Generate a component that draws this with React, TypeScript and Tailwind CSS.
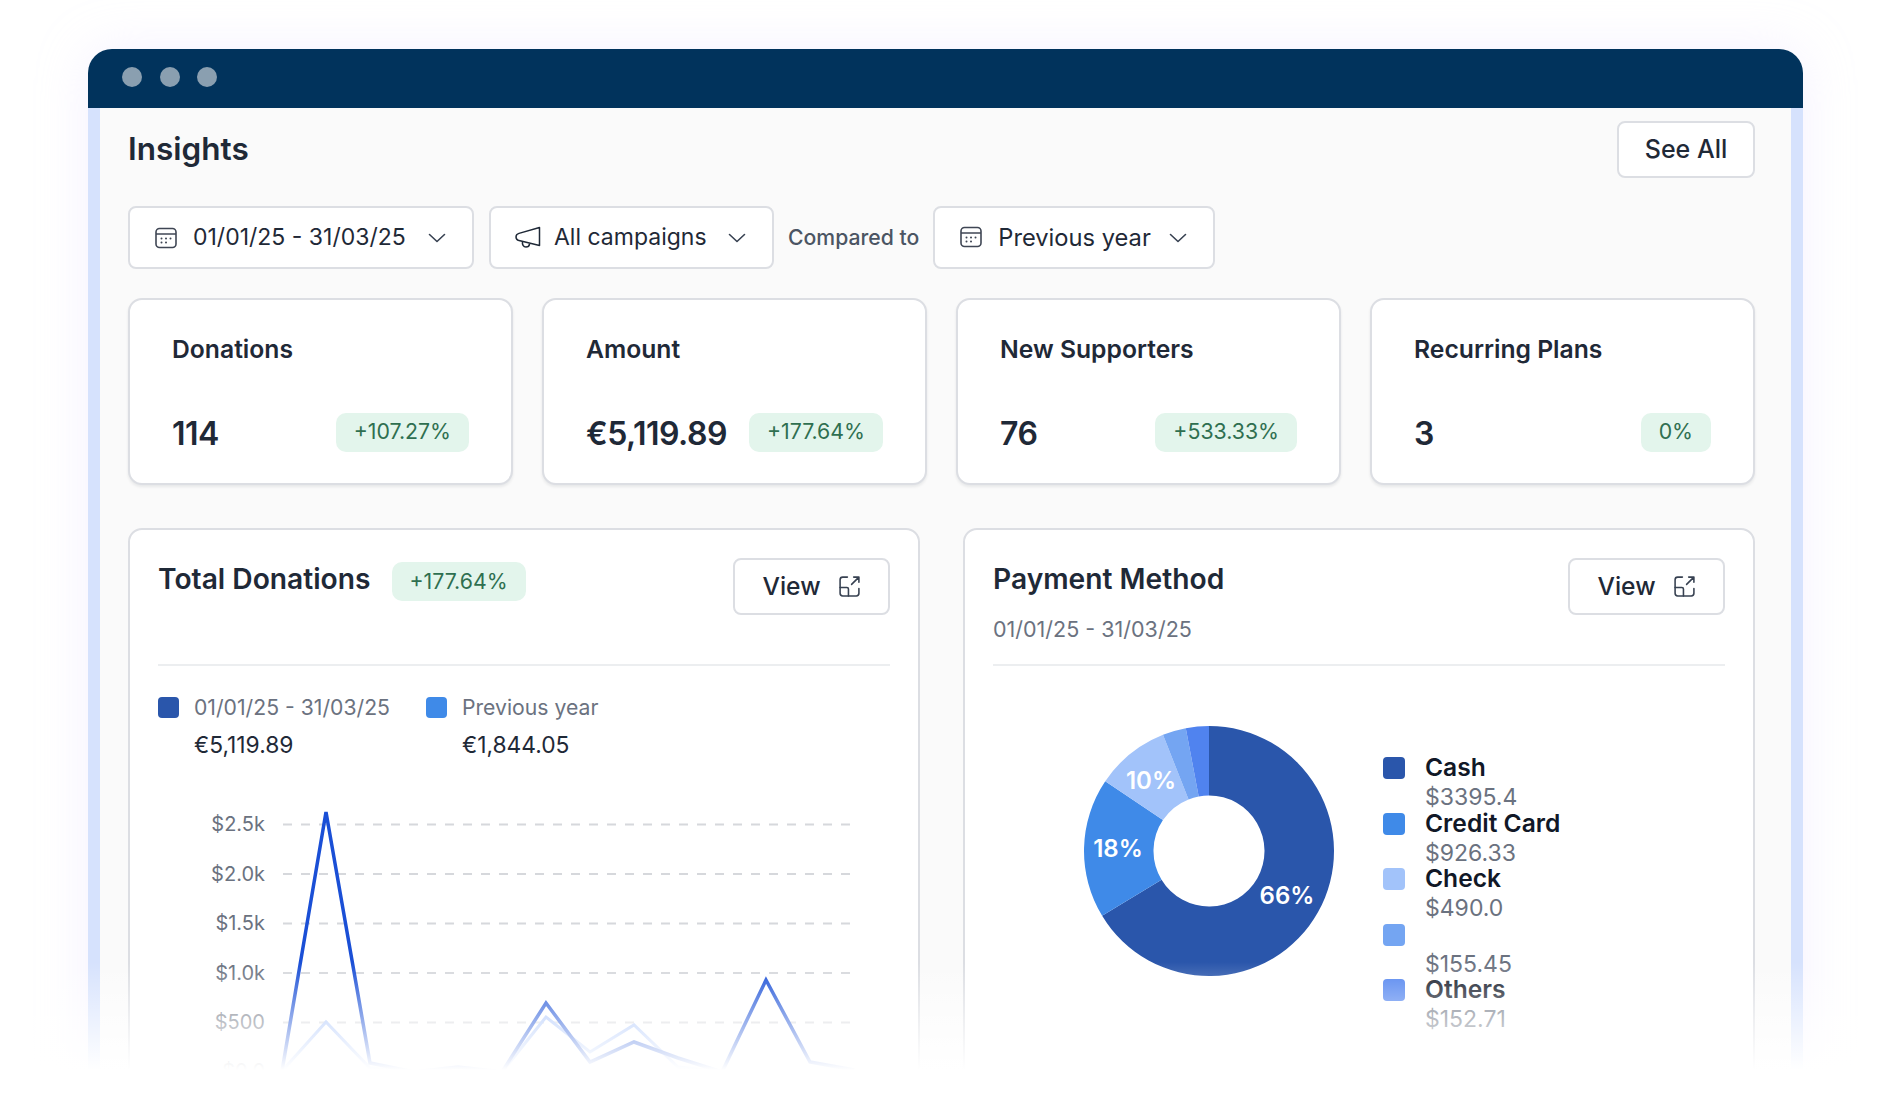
const inter = "font-['Inter',sans-serif]";

const stats = [
  { title: 'Donations', value: '114', change: '+107.27%' },
  { title: 'Amount', value: '€5,119.89', change: '+177.64%' },
  { title: 'New Supporters', value: '76', change: '+533.33%' },
  { title: 'Recurring Plans', value: '3', change: '0%' },
];

const yTicks = [
  { label: '$2.5k', y: 24 },
  { label: '$2.0k', y: 73.5 },
  { label: '$1.5k', y: 123 },
  { label: '$1.0k', y: 172.5 },
  { label: '$500', y: 222 },
  { label: '$0.0', y: 271 },
];

const current = [271, 12, 263, 272, 267, 272, 203, 262, 242, 258, 272, 180, 262, 270];
const previous = [271, 222, 268, 272, 272, 272, 217, 252, 225, 267, 272, 272, 272, 272];

const methods = [
  { name: 'Cash', amount: '$3395.4', color: 'bg-[#2a56ab]' },
  { name: 'Credit Card', amount: '$926.33', color: 'bg-[#3f8ae8]' },
  { name: 'Check', amount: '$490.0', color: 'bg-[#a2c3fa]' },
  { name: '', amount: '$155.45', color: 'bg-[#74a5f2]' },
  { name: 'Others', amount: '$152.71', color: 'bg-[#5083ef]' },
];

const slices = [
  { from: 0, to: 238.75, fill: '#2a56ab' },
  { from: 238.75, to: 303.9, fill: '#3f8ae8' },
  { from: 303.9, to: 338.4, fill: '#a2c3fa' },
  { from: 338.4, to: 349.3, fill: '#74a5f2' },
  { from: 349.3, to: 360, fill: '#5083ef' },
];

const toPoints = (values: number[]) => values.map((y, i) => `${83 + i * 44},${y}`).join(' ');

const slicePath = (from: number, to: number) => {
  const polar = (deg: number, r: number) => {
    const a = ((deg - 90) * Math.PI) / 180;
    return `${130 + r * Math.cos(a)} ${130 + r * Math.sin(a)}`;
  };
  const large = to - from > 180 ? 1 : 0;
  return `M${polar(from, 125)} A125 125 0 ${large} 1 ${polar(to, 125)} L${polar(to, 55.5)} A55.5 55.5 0 ${large} 0 ${polar(from, 55.5)} Z`;
};

const CalendarIcon = () => (
  <svg width="24" height="24" viewBox="0 0 24 24" fill="none" stroke="#3f4654" strokeWidth="1.6" className="shrink-0">
    <rect x="2" y="2.5" width="20" height="19" rx="3.5" />
    <path d="M2 8h20" />
    <path d="M7.5 12.5h.01M12 12.5h.01M16.5 12.5h.01M7.5 16.5h.01M12 16.5h.01" strokeWidth="2" strokeLinecap="round" />
  </svg>
);

const MegaphoneIcon = () => (
  <svg width="26" height="26" viewBox="0 0 26 26" fill="none" stroke="#1f2937" strokeWidth="1.5" strokeLinejoin="round" className="shrink-0">
    <path d="M24.5 2.5v18L4 15.6C2 15 1 13.6 1 12s1-3 3-3.6L24.5 2.5z" />
    <path d="M7.5 16.5c-.5 3 .8 5.5 3.5 5.5 2 0 3.3-1.2 3.6-3.2" />
  </svg>
);

const Chevron = () => (
  <svg width="18" height="10" viewBox="0 0 18 10" fill="none" stroke="#374151" strokeWidth="1.6" strokeLinecap="round" strokeLinejoin="round" className="shrink-0">
    <path d="M1.5 1.5 9 8.5l7.5-7" />
  </svg>
);

const ExpandIcon = () => (
  <svg width="23" height="23" viewBox="0 0 22 22" fill="none" stroke="#374151" strokeWidth="1.5" strokeLinecap="round" strokeLinejoin="round" className="shrink-0">
    <path d="M9 2H4.5A2.5 2.5 0 0 0 2 4.5v13A2.5 2.5 0 0 0 4.5 20h13a2.5 2.5 0 0 0 2.5-2.5V13" />
    <path d="M2 12h6.5a1.5 1.5 0 0 1 1.5 1.5V20" />
    <path d="M13 9l7-7M15 2h5v5" />
  </svg>
);

function Badge({ text, className = '' }: { text: string; className?: string }) {
  return (
    <span className={`inline-flex h-[39px] items-center rounded-[10px] bg-[#e3f5ec] px-[18px] text-[21.3px] text-[#2f6f50] ${className}`}>
      {text}
    </span>
  );
}

function Filter({ children, width }: { children: React.ReactNode; width: string }) {
  return (
    <div className={`flex h-[63px] items-center justify-between rounded-[8px] border-2 border-[#dcdee3] bg-white pl-[24px] pr-[26px] text-[#1f2937] ${width}`}>
      {children}
    </div>
  );
}

function ViewButton() {
  return (
    <div className="flex h-[57px] w-[157px] shrink-0 items-center justify-center gap-[17px] rounded-[8px] border-2 border-[#dcdee3] bg-white text-[24.6px] font-medium text-[#1f2937]">
      View
      <ExpandIcon />
    </div>
  );
}

function LegendItem({ color, label, value }: { color: string; label: string; value: string }) {
  return (
    <div className="grid grid-cols-[21px_auto] gap-x-[15px]">
      <span className={`mt-[10px] h-[21px] w-[21px] rounded-[4px] ${color}`} />
      <span className="text-[21.2px] leading-[40px] text-[#6b7280]">{label}</span>
      <span />
      <span className="text-[22.8px] leading-[35px] text-[#1f2937]">{value}</span>
    </div>
  );
}

function LineChart() {
  return (
    <svg width="680" height="320" viewBox="0 0 680 320" className="ml-[41px] mt-[38px] block" fill="none">
      {yTicks.map((tick) => (
        <g key={tick.label}>
          <text x="66" y={tick.y + 7} textAnchor="end" fontSize="20" fill="#6b7280" fontFamily="Inter, sans-serif">
            {tick.label}
          </text>
          {tick.label !== '$0.0' && (
            <line x1="84" x2="657" y1={tick.y + 0.5} y2={tick.y + 0.5} stroke="#d6d8dc" strokeWidth="2" strokeDasharray="9 9" />
          )}
        </g>
      ))}
      <polyline points={toPoints(previous)} stroke="#a9c4fb" strokeWidth="3" strokeLinejoin="miter" />
      <polyline points={toPoints(current)} stroke="#1a4fd6" strokeWidth="3.5" strokeLinejoin="miter" />
    </svg>
  );
}

function Donut() {
  return (
    <svg width="260" height="260" viewBox="0 0 260 260" className="shrink-0">
      {slices.map((s) => (
        <path key={s.fill} d={slicePath(s.from, s.to)} fill={s.fill} />
      ))}
      <g fill="#fff" fontSize="24" fontWeight="600" textAnchor="middle" fontFamily="Inter, sans-serif">
        <text x="208" y="183">66%</text>
        <text x="39" y="136">18%</text>
        <text x="72" y="68">10%</text>
      </g>
    </svg>
  );
}

export default function App() {
  return (
    <div className={`relative h-[1106px] overflow-hidden bg-white px-[88px] pt-[49px] ${inter}`}>
      <div className="h-[1100px] w-[1715px] overflow-hidden rounded-t-[24px] shadow-[0_0_50px_rgba(225,215,255,0.35)]">
        {/* Title bar */}
        <div className="flex h-[59px] items-center gap-[17.5px] bg-[#01335c] pb-[3px] pl-[34px]">
          <span className="h-[20px] w-[20px] rounded-full bg-[#8a9fb0]" />
          <span className="h-[20px] w-[20px] rounded-full bg-[#8a9fb0]" />
          <span className="h-[20px] w-[20px] rounded-full bg-[#8a9fb0]" />
        </div>

        <div className="h-full border-x-[12px] border-[#d6e2fd] bg-[#fafafa] pl-[28px] pr-[36px] pt-[13px]">
          {/* Heading */}
          <div className="flex items-center justify-between">
            <h1 className="pb-[2px] text-[31.5px] font-semibold leading-[54px] text-[#1f2937]">Insights</h1>
            <div className="flex h-[57px] w-[138px] items-center justify-center rounded-[8px] border-2 border-[#dcdee3] bg-white text-[25px] font-medium text-[#1f2937]">
              See All
            </div>
          </div>

          {/* Filters */}
          <div className="mt-[28px] flex items-center">
            <Filter width="w-[346px] text-[23px]">
              <span className="flex items-center gap-[15px]">
                <CalendarIcon />
                01/01/25 - 31/03/25
              </span>
              <Chevron />
            </Filter>
            <div className="ml-[15px]">
              <Filter width="w-[285px] text-[23px]">
                <span className="flex items-center gap-[13px]">
                  <MegaphoneIcon />
                  All campaigns
                </span>
                <Chevron />
              </Filter>
            </div>
            <span className="ml-[14px] mr-[14px] text-[21.2px] font-medium text-[#4b5563]">Compared to</span>
            <Filter width="w-[282px] text-[23.7px]">
              <span className="flex items-center gap-[15px]">
                <CalendarIcon />
                Previous year
              </span>
              <Chevron />
            </Filter>
          </div>

          {/* Stat cards */}
          <div className="mt-[29px] grid grid-cols-4 gap-[29px]">
            {stats.map((stat) => (
              <div
                key={stat.title}
                className="h-[187px] rounded-[14px] border-2 border-[#dcdee3] bg-white pl-[42px] pr-[42px] pt-[32px] shadow-[0_2px_3px_rgba(17,24,39,0.08)]"
              >
                <div className="text-[24.7px] font-semibold leading-[34px] text-[#1f2937]">{stat.title}</div>
                <div className="mt-[44px] flex items-center justify-between">
                  <span className="relative top-[3px] text-[32px] font-semibold leading-[42px] tracking-[-0.5px] text-[#1f2937]">{stat.value}</span>
                  <Badge text={stat.change} className="relative top-[1px]" />
                </div>
              </div>
            ))}
          </div>

          {/* Chart cards */}
          <div className="mt-[43px] grid grid-cols-[792px_792px] justify-between">
            <div className="h-[620px] rounded-[14px] border-2 border-[#dcdee3] bg-white px-[28px] pt-[28px]">
              <div className="flex h-[108px] items-start justify-between border-b-2 border-[#eceef0]">
                <div className="flex items-start gap-[21px]">
                  <h2 className="text-[28.2px] font-semibold leading-[42px] text-[#1f2937]">Total Donations</h2>
                  <Badge text="+177.64%" className="mt-[4px]" />
                </div>
                <ViewButton />
              </div>
              <div className="mt-[21px] flex gap-[36px]">
                <LegendItem color="bg-[#2a56ab]" label="01/01/25 - 31/03/25" value="€5,119.89" />
                <LegendItem color="bg-[#3f8ae8]" label="Previous year" value="€1,844.05" />
              </div>
              <LineChart />
            </div>

            <div className="h-[620px] rounded-[14px] border-2 border-[#dcdee3] bg-white px-[28px] pt-[28px]">
              <div className="flex h-[108px] items-start justify-between border-b-2 border-[#eceef0]">
                <div>
                  <h2 className="text-[28.2px] font-semibold leading-[42px] text-[#1f2937]">Payment Method</h2>
                  <p className="mt-[13px] text-[21.5px] leading-[33px] text-[#6b7280]">01/01/25 - 31/03/25</p>
                </div>
                <ViewButton />
              </div>
              <div className="mt-[55px] flex items-start pl-[86px]">
                <Donut />
                <div className="ml-[44px] mt-[31px]">
                  {methods.map((m) => (
                    <div key={m.amount} className="grid h-[55.5px] grid-cols-[22px_auto] gap-x-[20px]">
                      <span className={`mt-[5px] h-[22px] w-[22px] rounded-[4px] ${m.color}`} />
                      <div>
                        <div className="h-[30px] text-[24.6px] font-semibold leading-[30px] text-[#111827]">{m.name}</div>
                        <div className="text-[23px] leading-[30px] text-[#6b7280]">{m.amount}</div>
                      </div>
                    </div>
                  ))}
                </div>
              </div>
            </div>
          </div>
        </div>
      </div>

      {/* bottom fade over the window */}
      <div className="absolute inset-x-0 top-[962px] h-[108px] bg-gradient-to-b from-white/0 to-white" />
      <div className="absolute inset-x-0 top-[1070px] h-[36px] bg-white" />
    </div>
  );
}
